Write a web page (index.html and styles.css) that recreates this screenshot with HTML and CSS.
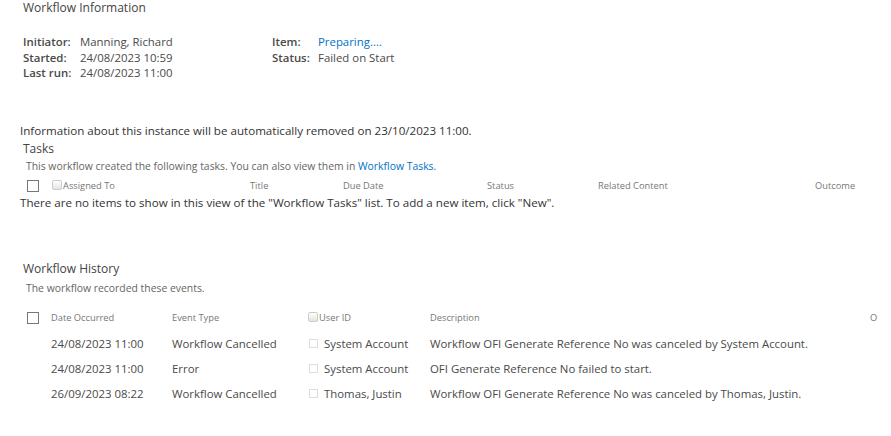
FILE: index.html
```html
<!DOCTYPE html>
<html lang="en">
<head>
    <meta charset="UTF-8">
    <meta name="viewport" content="width=device-width, initial-scale=1.0">
    <title>Workflow Status</title>
    <link rel="stylesheet" href="styles.css">
</head>
<body>
    <div class="page">
        <h2 class="section-title">Workflow Information</h2>
        <div class="info-grid">
            <div class="info-col">
                <div class="info-row"><span class="info-label">Initiator:</span><span>Manning, Richard</span></div>
                <div class="info-row"><span class="info-label">Started:</span><span>24/08/2023 10:59</span></div>
                <div class="info-row"><span class="info-label">Last run:</span><span>24/08/2023 11:00</span></div>
            </div>
            <div class="info-col">
                <div class="info-row"><span class="info-label short">Item:</span><a class="link" href="#">Preparing....</a></div>
                <div class="info-row"><span class="info-label short">Status:</span><span>Failed on Start</span></div>
            </div>
        </div>

        <p class="notice">Information about this instance will be automatically removed on 23/10/2023 11:00.</p>

        <h2 class="section-title small-gap">Tasks</h2>
        <p class="desc">This workflow created the following tasks. You can also view them in <a class="link" href="#">Workflow Tasks</a>.</p>
        <div class="list-head tasks-head">
            <span class="box"></span>
            <span class="col-assigned"><span class="mini-box"></span>Assigned To</span>
            <span class="col-title">Title</span>
            <span class="col-due">Due Date</span>
            <span class="col-status">Status</span>
            <span class="col-related">Related Content</span>
            <span class="col-outcome">Outcome</span>
        </div>
        <p class="notice empty">There are no items to show in this view of the "Workflow Tasks" list. To add a new item, click "New".</p>

        <h2 class="section-title history-title">Workflow History</h2>
        <p class="desc history-desc">The workflow recorded these events.</p>
        <div class="list-head history-grid">
            <span class="box"></span>
            <span>Date Occurred</span>
            <span>Event Type</span>
            <span class="user-head"><span class="mini-box"></span>User ID</span>
            <span>Description</span>
            <span>O</span>
        </div>
        <div class="history-rows">
            <div class="history-grid history-row">
                <span></span>
                <span>24/08/2023 11:00</span>
                <span>Workflow Cancelled</span>
                <span class="user"><span class="user-box"></span>System Account</span>
                <span>Workflow OFI Generate Reference No was canceled by System Account.</span>
                <span></span>
            </div>
            <div class="history-grid history-row">
                <span></span>
                <span>24/08/2023 11:00</span>
                <span>Error</span>
                <span class="user"><span class="user-box"></span>System Account</span>
                <span>OFI Generate Reference No failed to start.</span>
                <span></span>
            </div>
            <div class="history-grid history-row">
                <span></span>
                <span>26/09/2023 08:22</span>
                <span>Workflow Cancelled</span>
                <span class="user"><span class="user-box"></span>Thomas, Justin</span>
                <span>Workflow OFI Generate Reference No was canceled by Thomas, Justin.</span>
                <span></span>
            </div>
        </div>
    </div>
</body>
</html>
```

FILE: styles.css
```css
body {
    margin: 0;
    font-family: 'Open Sans', 'Noto Sans', sans-serif;
    color: #4a4a4a;
    background: #fff;
}
.page {
    padding: 0 0 0 20px;
}
.section-title {
    font-size: 12px;
    font-weight: normal;
    color: #444;
    margin: 0;
    padding: 0 0 0 3px;
    line-height: 15px;
}
.info-grid {
    display: flex;
    padding: 19px 0 0 3px;
}
.info-col {
    width: 249px;
}
.info-row {
    font-size: 11.4px;
    line-height: 15.5px;
    color: #4a4a4a;
}
.info-label {
    display: inline-block;
    width: 57px;
    font-weight: 600;
}
.info-label.short {
    width: 46px;
}
.link {
    color: #0072c6;
    text-decoration: none;
}
.notice {
    font-size: 11.6px;
    color: #333;
    margin: 42px 0 0;
    line-height: 15px;
}
.small-gap {
    padding-top: 3px;
}
.desc {
    font-size: 10.4px;
    color: #666;
    margin: 3px 0 0 6px;
    line-height: 14px;
}
.history-desc {
    margin-top: 5px;
}
.list-head {
    font-size: 9.3px;
    color: #777;
    height: 22px;
    align-items: center;
}
.tasks-head {
    display: flex;
    margin-top: 2px;
}
.box {
    display: inline-block;
    width: 10px;
    height: 10px;
    border: 1px solid #777;
    margin-left: 7px;
}
.mini-box {
    display: inline-block;
    width: 8px;
    height: 8px;
    border: 1px solid #ccc;
    border-radius: 2px;
    background: linear-gradient(#fff, #e4e4e4);
    margin-right: 1px;
    vertical-align: -1px;
}
.col-assigned { margin-left: 13px; width: 198px; }
.col-title { width: 93px; }
.col-due { width: 144px; }
.col-status { width: 111px; }
.col-related { width: 217px; }
.empty {
    margin-top: -2px;
}
.history-title {
    padding-top: 51px;
}
.history-grid {
    display: grid;
    grid-template-columns: 31px 121px 137px 121px 440px 1fr;
    align-items: center;
}
.list-head.history-grid {
    margin-top: 12px;
}
.user-head {
    margin-left: -1px;
}
.history-rows {
    padding-top: 2px;
}
.history-row {
    font-size: 11.4px;
    color: #4a4a4a;
    height: 25px;
}
.user {
    display: flex;
    align-items: center;
}
.user-box {
    width: 7px;
    height: 7px;
    border: 1px solid #ddd;
    margin-right: 6px;
}
```
